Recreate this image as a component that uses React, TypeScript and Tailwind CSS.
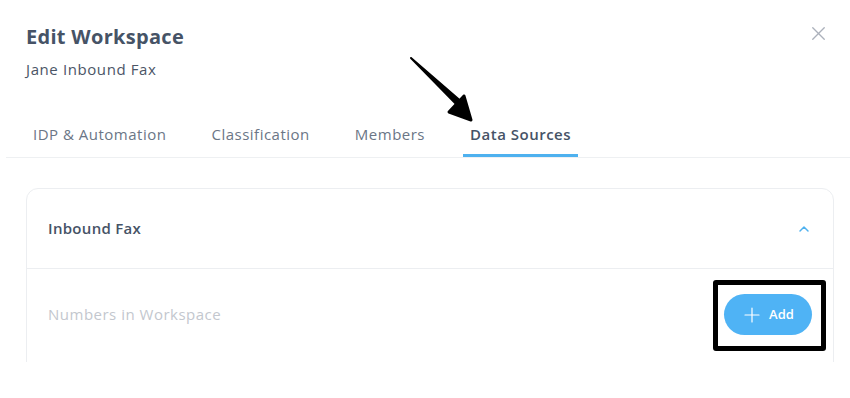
import { FiChevronUp, FiPlus, FiX } from "react-icons/fi"

const tabs = ["IDP & Automation", "Classification", "Members", "Data Sources"]

export default function App() {
  const active = "Data Sources"

  return (
    <div
      className="relative h-[398px] w-[850px] overflow-hidden bg-white"
      style={{ fontFamily: "'Open Sans', 'Noto Sans', sans-serif" }}
    >
      <div className="h-[362px] overflow-hidden">
        <div className="flex items-start justify-between px-[26px] pt-[24px]">
          <div>
            <h1 className="text-[20px] leading-[26px] font-bold tracking-[0.3px] text-[#465366]">
              Edit Workspace
            </h1>
            <p className="mt-[9px] text-[15px] leading-[20px] tracking-[0.6px] text-[#4b5566]">
              Jane Inbound Fax
            </p>
          </div>
          <button className="mt-[-2px] mr-[-6px] text-[#abb1bb]" type="button" aria-label="Close">
            <FiX className="h-[23px] w-[23px]" strokeWidth={1.4} />
          </button>
        </div>

        <div className="mt-[45px] ml-[6px] flex gap-[31px] border-b border-[#eef0f2] pl-[20px]">
          {tabs.map((t) => (
            <div
              key={t}
              className={
                t === active
                  ? "border-b-[3px] border-[#4eb1ef] px-[7px] pb-[10px] text-[15px] leading-[20px] font-semibold tracking-[0.5px] text-[#465366]"
                  : "border-b-[3px] border-transparent px-[7px] pb-[10px] text-[15px] leading-[20px] tracking-[0.5px] text-[#6b7686]"
              }
            >
              {t}
            </div>
          ))}
        </div>

        <div className="mt-[30px] mr-[16px] ml-[26px] rounded-t-[12px] border border-[#eceef1]">
          <div className="flex h-[80px] items-center justify-between border-b border-[#eceef1] pr-[21px] pl-[21px]">
            <span className="text-[15px] font-semibold tracking-[0.3px] text-[#465366]">Inbound Fax</span>
            <FiChevronUp className="h-[16px] w-[16px] text-[#4eb1ef]" strokeWidth={2.2} />
          </div>
          <div className="flex h-[140px] items-start justify-between pt-[25px] pr-[21px] pl-[21px]">
            <span className="mt-[9px] text-[15px] tracking-[0.5px] text-[#c3c7ce]">
              Numbers in Workspace
            </span>
            <button
              className="flex h-[41px] w-[88px] items-center justify-center gap-[5px] rounded-full bg-[#4fb3f5] pr-[2px] text-[13px] font-semibold text-white"
              type="button"
            >
              <FiPlus className="h-[24px] w-[24px]" strokeWidth={1.2} />
              Add
            </button>
          </div>
        </div>
      </div>

      {/* annotation: pointer arrow */}
      <svg className="absolute top-[55px] left-[405px]" width="72" height="70" viewBox="0 0 72 70">
        <path d="M6 3 L54 52 L58 48 Z" fill="#000" stroke="#000" strokeWidth="2" strokeLinejoin="round" />
        <path d="M44 57 L66 65 L59 41 Z" fill="#000" stroke="#000" strokeWidth="3" strokeLinejoin="round" />
      </svg>

      {/* annotation: highlight box */}
      <div className="absolute top-[280px] left-[713px] h-[71px] w-[113px] rounded-[3px] border-[5px] border-black" />
    </div>
  )
}
